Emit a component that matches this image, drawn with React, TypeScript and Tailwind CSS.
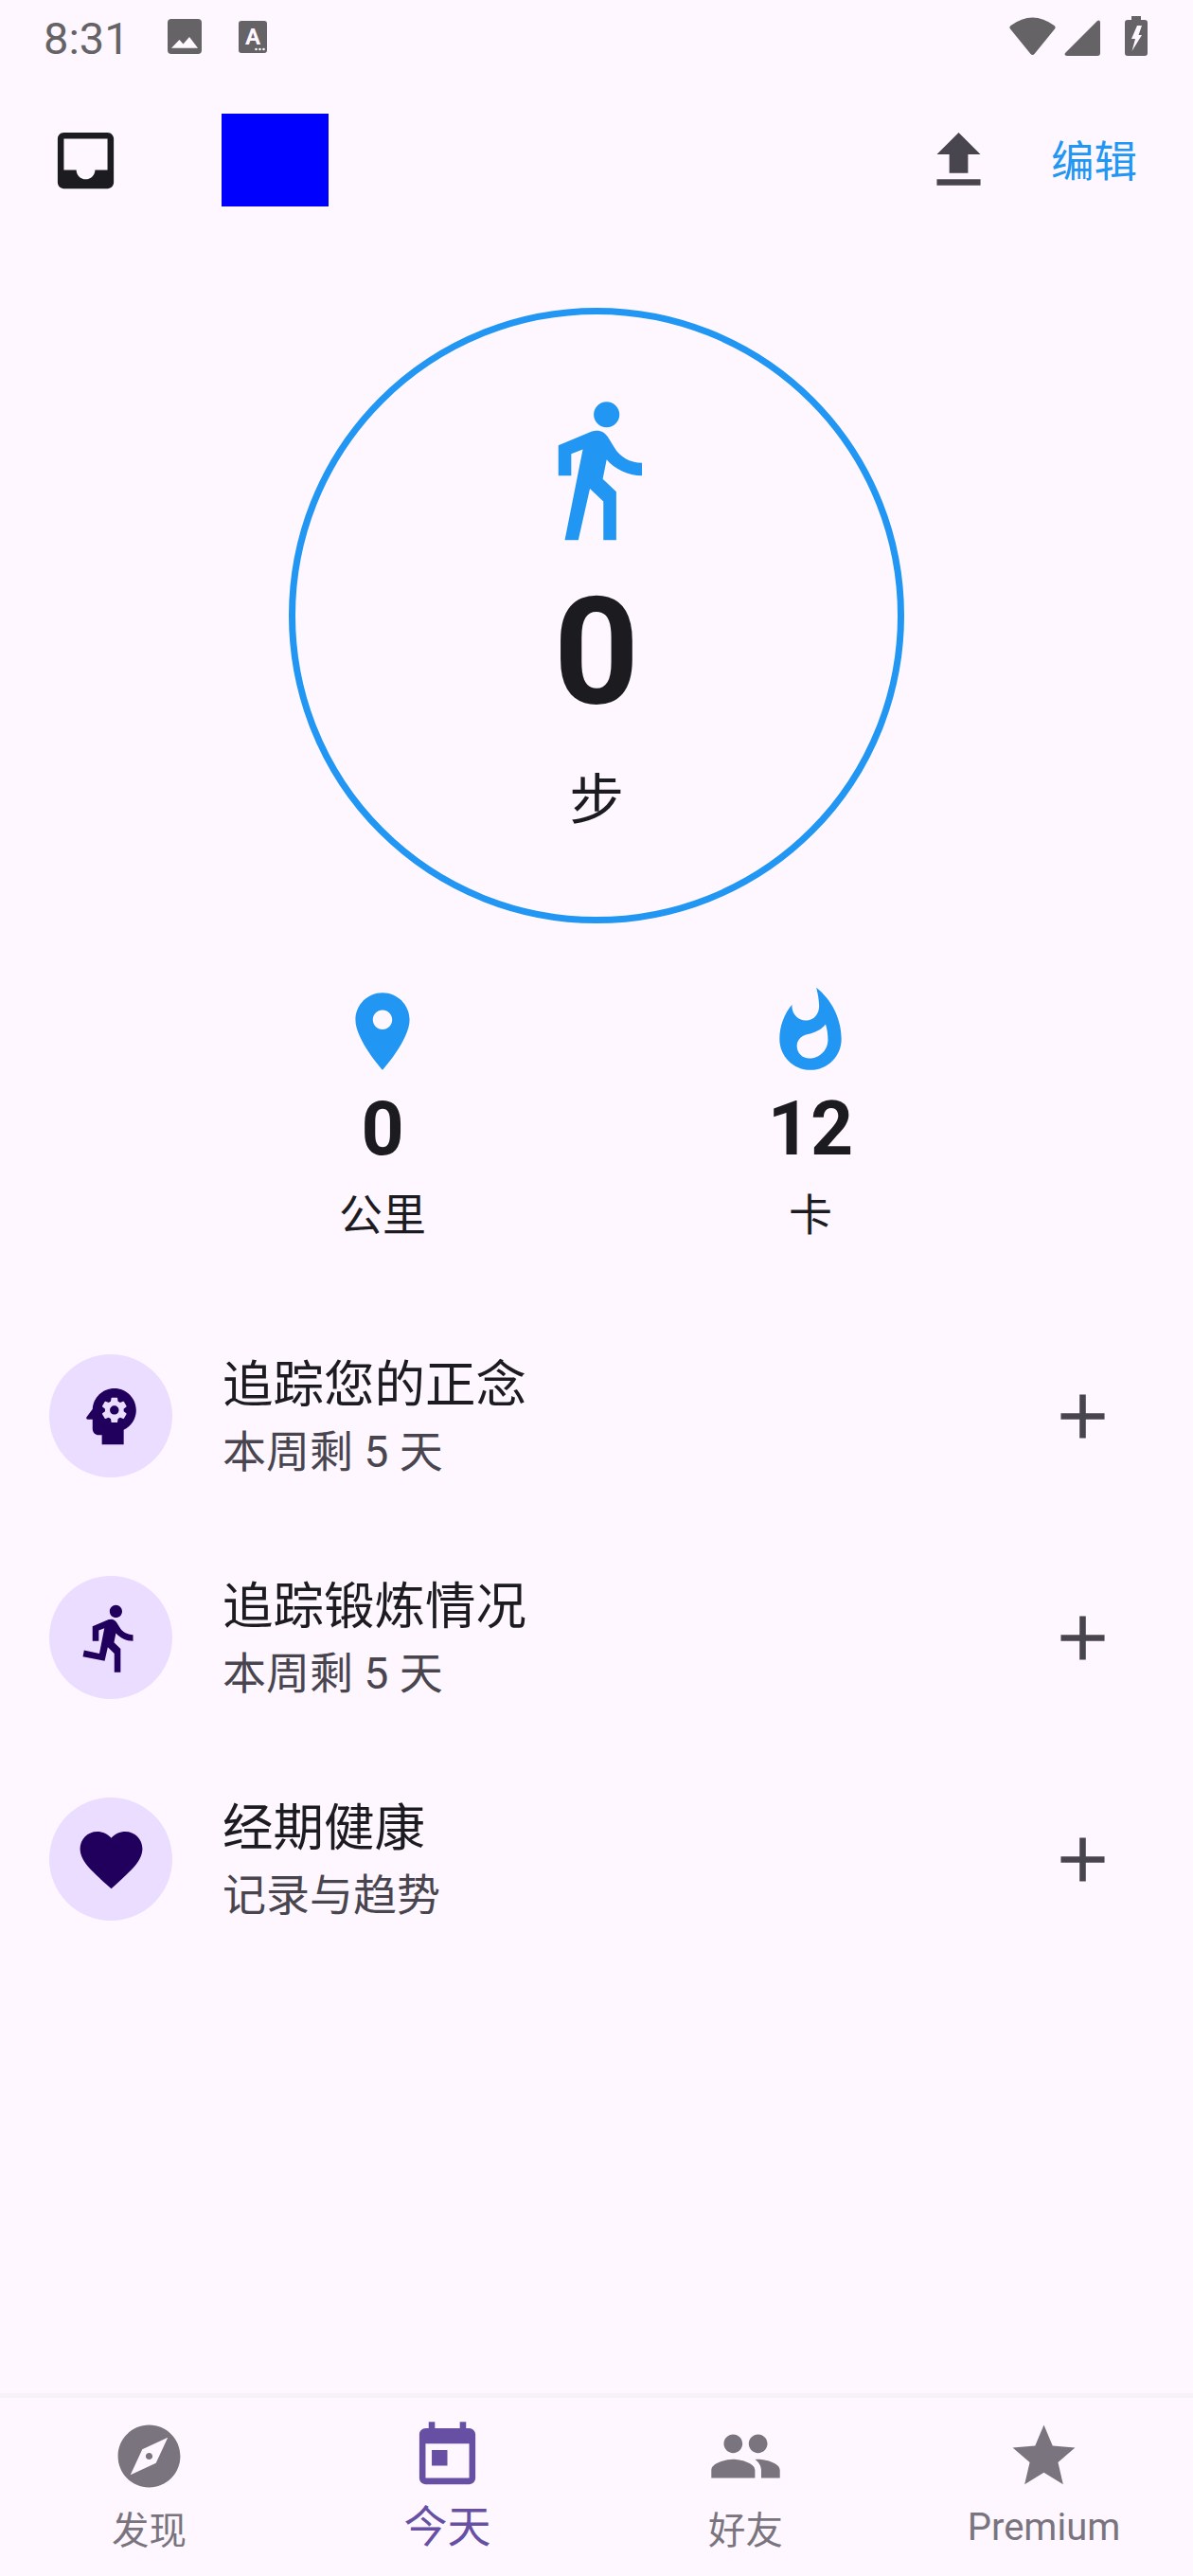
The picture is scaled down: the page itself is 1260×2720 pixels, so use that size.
import React from 'react';

const paths = {
  inbox: 'M19 3H4.99c-1.11 0-1.98.89-1.98 2L3 19c0 1.1.88 2 1.99 2H19c1.1 0 2-.9 2-2V5c0-1.11-.9-2-2-2zm0 12h-4c0 1.66-1.35 3-3 3s-3-1.34-3-3H4.99V5H19v10z',
  upload: 'M9 16h6v-6h4l-7-7-7 7h4zm-4 2h14v2H5z',
  walk: 'M13.5 5.5c1.1 0 2-.9 2-2s-.9-2-2-2-2 .9-2 2 .9 2 2 2zM9.8 8.9L7 23h2.1l1.8-8 2.1 2v6h2v-7.5l-2.1-2 .6-3C14.8 12 16.8 13 19 13v-2c-1.9 0-3.5-1-4.3-2.4l-1-1.6c-.4-.6-1-1-1.7-1-.3 0-.5.1-.8.1L6 8.3V13h2V9.6l1.8-.7',
  pin: 'M12 2C8.13 2 5 5.13 5 9c0 5.25 7 13 7 13s7-7.75 7-13c0-3.87-3.13-7-7-7zm0 9.5c-1.38 0-2.5-1.12-2.5-2.5s1.12-2.5 2.5-2.5 2.5 1.12 2.5 2.5-1.12 2.5-2.5 2.5z',
  flame: 'M13.5.67s.74 2.65.74 4.8c0 2.06-1.35 3.73-3.41 3.73-2.07 0-3.63-1.67-3.63-3.73l.03-.36C5.21 7.51 4 10.62 4 14c0 4.42 3.58 8 8 8s8-3.58 8-8C20 8.61 17.41 3.8 13.5.67zM11.71 19c-1.78 0-3.22-1.4-3.22-3.14 0-1.62 1.05-2.76 2.81-3.12 1.77-.36 3.6-1.21 4.62-2.58.39 1.29.59 2.65.59 4.04 0 2.65-2.15 4.8-4.8 4.8z',
  head: 'M13 8.57c-.79 0-1.43.64-1.43 1.43s.64 1.43 1.43 1.43 1.43-.64 1.43-1.43-.64-1.43-1.43-1.43zM13 3C9.25 3 6.2 5.94 6.02 9.64L4.1 12.2c-.25.33 0 .8.4.8H6v3c0 1.1.9 2 2 2h1v3h7v-4.68c2.36-1.12 4-3.53 4-6.32 0-3.87-3.13-7-7-7zm3 7c0 .13-.01.26-.02.39l.83.66c.08.06.1.16.05.25l-.8 1.39c-.05.09-.16.12-.24.09l-.99-.4c-.21.16-.43.29-.67.39L14 13.83c-.01.1-.1.17-.2.17h-1.6c-.1 0-.18-.07-.2-.17l-.15-1.06c-.25-.1-.47-.23-.68-.39l-.99.4c-.09.03-.2 0-.25-.09l-.8-1.39c-.05-.08-.03-.19.05-.25l.84-.66c-.01-.13-.02-.26-.02-.39s.02-.27.04-.39l-.85-.66c-.08-.06-.1-.16-.05-.26l.8-1.38c.05-.09.15-.12.24-.09l1 .4c.2-.15.43-.29.67-.39L12 6.17c.02-.1.1-.17.2-.17h1.6c.1 0 .18.07.2.17l.15 1.06c.24.1.46.23.67.39l1-.4c.09-.03.2 0 .24.09l.8 1.38c.05.09.03.2-.05.26l-.85.66c.03.12.04.25.04.39z',
  run: 'M13.49 5.48c1.1 0 2-.9 2-2s-.9-2-2-2-2 .9-2 2 .9 2 2 2zm-3.6 13.9l1-4.4 2.1 2v6h2v-7.5l-2.1-2 .6-3c1.3 1.5 3.3 2.5 5.5 2.5v-2c-1.9 0-3.5-1-4.3-2.4l-1-1.6c-.4-.6-1-1-1.7-1-.3 0-.5.1-.8.1l-5.2 2.2v4.7h2v-3.4l1.8-.7-1.6 8.1-4.9-1-.4 2 7 1.4z',
  heart: 'M12 21.35l-1.45-1.32C5.4 15.36 2 12.28 2 8.5 2 5.42 4.42 3 7.5 3c1.74 0 3.41.81 4.5 2.09C13.09 3.81 14.76 3 16.5 3 19.58 3 22 5.42 22 8.5c0 3.78-3.4 6.86-8.55 11.54L12 21.35z',
  plus: 'M19 13h-6v6h-2v-6H5v-2h6V5h2v6h6v2z',
  explore: 'M12 10.9c-.61 0-1.1.49-1.1 1.1s.49 1.1 1.1 1.1c.61 0 1.1-.49 1.1-1.1s-.49-1.1-1.1-1.1zM12 2C6.48 2 2 6.48 2 12s4.48 10 10 10 10-4.48 10-10S17.52 2 12 2zm2.19 12.19L6 18l3.81-8.19L18 6l-3.81 8.19z',
  today: 'M19 3h-1V1h-2v2H8V1H6v2H5c-1.11 0-1.99.9-1.99 2L3 19c0 1.1.89 2 2 2h14c1.1 0 2-.9 2-2V5c0-1.1-.9-2-2-2zm0 16H5V8h14v11zM7 10h5v5H7z',
  people: 'M16 11c1.66 0 2.99-1.34 2.99-3S17.66 5 16 5c-1.66 0-3 1.34-3 3s1.34 3 3 3zm-8 0c1.66 0 2.99-1.34 2.99-3S9.66 5 8 5C6.34 5 5 6.34 5 8s1.34 3 3 3zm0 2c-2.33 0-7 1.17-7 3.5V19h14v-2.5c0-2.33-4.67-3.5-7-3.5zm8 0c-.29 0-.62.02-.97.05 1.16.84 1.97 1.97 1.97 3.45V19h6v-2.5c0-2.33-4.67-3.5-7-3.5z',
  star: 'M12 17.27L18.18 21l-1.64-7.03L22 9.24l-7.19-.61L12 2 9.19 8.63 2 9.24l5.46 4.73L5.82 21z',
};

const Icon = ({ d, className }: { d: string; className: string }) => (
  <svg viewBox="0 0 24 24" className={`fill-current shrink-0 ${className}`}>
    <path d={d} />
  </svg>
);

const StatusBar = () => (
  <div className="flex items-start h-[120px] pl-[46px] pr-[48px] text-[#666366]">
    <span className="mt-[17px] text-[47px] leading-[47px]">8:31</span>
    <svg viewBox="0 0 36 37" className="ml-[40px] mt-[20px] w-[36px] h-[37px] fill-current">
      <rect width="36" height="37" rx="4" />
      <path d="M4 30.7L12.5 22l4 4.5L23 19l9 11.7z" fill="#fef7ff" />
    </svg>
    <svg viewBox="0 0 30 34" className="ml-[39px] mt-[22px] w-[30px] h-[34px] fill-current">
      <rect width="30" height="34" rx="3" />
      <text x="15" y="25" textAnchor="middle" fontSize="24" fontWeight="700" fill="#fef7ff" fontFamily="Roboto">A</text>
      <circle cx="18.5" cy="30" r="1.3" fill="#fef7ff" />
      <circle cx="22.5" cy="30" r="1.3" fill="#fef7ff" />
      <circle cx="26.5" cy="30" r="1.3" fill="#fef7ff" />
    </svg>
    <svg viewBox="0 0 49 40" className="ml-auto mt-[18px] w-[49px] h-[40px] fill-current">
      <path d="M1.5 9Q24.5 -8 47.5 9Q49.5 10.5 48 12.500L26.500 39Q24.500 41 22.500 39L1 12.500Q-0.500 10.500 1.500 9Z" />
    </svg>
    <svg viewBox="0 0 38 38" className="ml-[9px] mt-[21px] w-[38px] h-[38px] fill-current">
      <path d="M35 1Q38 -0.500 38 3V35Q38 38 35 38H3Q-0.500 38 1 35Z" />
    </svg>
    <svg viewBox="0 0 24 42" className="ml-[26px] mt-[17px] w-[24px] h-[42px] fill-current">
      <path d="M7 0h10v4h4q3 0 3 3v32q0 3-3 3H3q-3 0-3-3V7q0-3 3-3h4z" />
      <path d="M13 10h5l-3.500 10H18L7.500 37 11 24H7z" fill="#fef7ff" />
    </svg>
  </div>
);

const Header = () => (
  <div className="flex items-center h-[98px] pl-[51px] pr-[59px]">
    <Icon d={paths.inbox} className="w-[79px] h-[79px] text-[#1c1b1f]" />
    <div className="ml-[104px] w-[113px] h-[98px] bg-[#0000ff]" />
    <Icon d={paths.upload} className="ml-auto w-[79px] h-[79px] text-[#49454f]" />
    <span className="ml-[58px] pt-[6px] text-[45.500px] leading-[60px] text-[#2196f3]">编辑</span>
  </div>
);

const StepsRing = () => (
  <div className="mt-[107px] mx-auto w-[650px] h-[650px] rounded-full border-[7px] border-[#2196f3] flex flex-col items-center pt-[82px]">
    <Icon d={paths.walk} className="w-[163px] h-[163px] text-[#2196f3]" />
    <div className="mt-[33px] text-[157.500px] leading-[157.500px] font-bold text-[#1c1b1f]">0</div>
    <div className="mt-[47px] text-[57.750px] leading-[60px] text-[#1c1b1f]">步</div>
  </div>
);

const Stat = ({ d, value, unit }: { d: string; value: string; unit: string }) => (
  <div className="w-[300px] flex flex-col items-center">
    <Icon d={d} className="w-[98px] h-[98px] text-[#2196f3]" />
    <div className="mt-[15px] text-[78.750px] leading-[79px] font-bold text-[#1c1b1f]">{value}</div>
    <div className="mt-[21px] text-[46px] leading-[60px] text-[#1c1b1f]">{unit}</div>
  </div>
);

const Row = ({ d, title, sub }: { d: string; title: string; sub: string }) => (
  <div className="flex items-center h-[234px] pl-[52px] pr-[77px]">
    <div className="w-[130px] h-[130px] rounded-full bg-[#eaddff] flex items-center justify-center text-[#21005d]">
      <Icon d={d} className="w-[79px] h-[79px]" />
    </div>
    <div className="ml-[53px] flex-1 pt-[6px]">
      <div className="text-[53.500px] leading-[70px] text-[#1c1b1f]">{title}</div>
      <div className="text-[46px] leading-[70px] text-[#49454f]">{sub}</div>
    </div>
    <Icon d={paths.plus} className="w-[79px] h-[79px] text-[#49454f]" />
  </div>
);

const NavItem = ({ d, label, labelClass }: { d: string; label: string; labelClass: string }) => (
  <div className="flex flex-col items-center">
    <Icon d={d} className="w-[79px] h-[79px]" />
    <span className={labelClass}>{label}</span>
  </div>
);

export default function App() {
  const idle = 'mt-[15px] text-[39.400px] leading-[50px]';
  return (
    <div className="w-[1260px] h-[2720px] bg-[#fef7ff] flex flex-col overflow-hidden font-[Roboto,'Noto_Sans_CJK_SC',sans-serif]">
      <StatusBar />
      <Header />
      <StepsRing />
      <div className="mt-[65px] flex justify-center gap-[152px]">
        <Stat d={paths.pin} value="0" unit="公里" />
        <Stat d={paths.flame} value="12" unit="卡" />
      </div>
      <div className="mt-[65px]">
        <Row d={paths.head} title="追踪您的正念" sub="本周剩 5 天" />
        <Row d={paths.run} title="追踪锻炼情况" sub="本周剩 5 天" />
        <Row d={paths.heart} title="经期健康" sub="记录与趋势" />
      </div>
      <div className="mt-auto h-[193px] border-t-[5px] border-[#f7f2f8] grid grid-cols-4 pt-[22px] text-[#79747e]">
        <NavItem d={paths.explore} label="发现" labelClass={idle} />
        <div className="text-[#6750a4]">
          <NavItem d={paths.today} label="今天" labelClass="mt-[10px] text-[46px] leading-[50px]" />
        </div>
        <NavItem d={paths.people} label="好友" labelClass={idle} />
        <NavItem d={paths.star} label="Premium" labelClass="mt-[11px] text-[40px] leading-[50px]" />
      </div>
    </div>
  );
}
